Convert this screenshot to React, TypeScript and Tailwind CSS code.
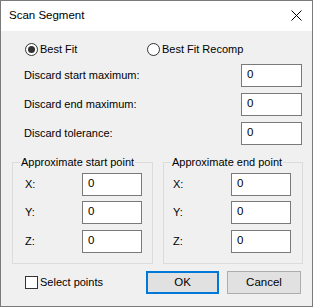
import React from 'react'

const font = { fontFamily: '"Liberation Sans", Arial, sans-serif' }

function TextBox({ value, className = '' }: { value: string; className?: string }) {
  return (
    <div
      className={`h-[23px] border border-[#7a7a7a] bg-white pl-[5px] text-[11.5px] leading-[19px] text-black ${className}`}
    >
      {value}
    </div>
  )
}

function Radio({ checked, label }: { checked?: boolean; label: string }) {
  return (
    <div className="flex items-center">
      <span className="flex h-[13px] w-[13px] items-center justify-center rounded-full border border-[#333] bg-white">
        {checked && <span className="h-[7px] w-[7px] rounded-full bg-[#333]" />}
      </span>
      <span className="ml-[2px] text-[11px] leading-[14px]">{label}</span>
    </div>
  )
}

function DiscardRow({ label }: { label: string }) {
  return (
    <div className="flex h-[23px] items-center justify-between pl-[23px] pr-[10px]">
      <span className="text-[11px]">{label}</span>
      <TextBox value="0" className="w-[61px]" />
    </div>
  )
}

function PointGroup({ title, labelPad, inputLeft }: { title: string; labelPad: string; inputLeft: string }) {
  const rows = ['X:', 'Y:', 'Z:']
  return (
    <div className="relative h-[102px] border border-[#dcdcdc]">
      <span className="absolute -top-[9px] left-[7px] whitespace-nowrap bg-[#f0f0f0] px-[1px] text-[11px] leading-[16px]">
        {title}
      </span>
      <div className={`flex flex-col pt-[10px] ${labelPad}`}>
        {rows.map((r, i) => (
          <div key={r} className={`flex h-[23px] items-center ${i === 1 ? 'mt-[5px]' : i === 2 ? 'mt-[6px]' : ''}`}>
            <span className={`text-[11px] ${inputLeft}`}>{r}</span>
            <TextBox value="0" className="w-[60px]" />
          </div>
        ))}
      </div>
    </div>
  )
}

export default function App() {
  return (
    <div style={font} className="h-[307px] w-[313px] border border-[#7a7a7a] bg-[#f0f0f0] text-black">
      {/* title bar */}
      <div className="flex h-[30px] items-center justify-between bg-white pl-[8px] pr-[10px]">
        <span className="text-[11.5px]">Scan Segment</span>
        <svg width="11" height="11" viewBox="0 0 11 11" className="mb-[1px]">
          <path d="M0.5 0.5 L10.5 10.5 M10.5 0.5 L0.5 10.5" stroke="#000" strokeWidth="1" />
        </svg>
      </div>

      {/* radios */}
      <div className="mt-[11px] flex h-[14px] items-center pl-[24px]">
        <div className="w-[122px]">
          <Radio checked label="Best Fit" />
        </div>
        <Radio label="Best Fit Recomp" />
      </div>

      <div className="mt-[8px] flex flex-col gap-[6px]">
        <DiscardRow label="Discard start maximum:" />
        <DiscardRow label="Discard end maximum:" />
        <DiscardRow label="Discard tolerance:" />
      </div>

      <div className="mt-[17px] grid grid-cols-[141px_140px] gap-[10px] pl-[11px]">
        <PointGroup title="Approximate start point" labelPad="pl-[12px]" inputLeft="w-[57px]" />
        <PointGroup title="Approximate end point" labelPad="pl-[9px]" inputLeft="w-[58px]" />
      </div>

      {/* footer */}
      <div className="mt-[7px] flex h-[23px] items-center pl-[24px]">
        <div className="flex w-[121px] items-center">
          <span className="h-[13px] w-[13px] border border-[#333] bg-white" />
          <span className="ml-[2px] text-[11px]">Select points</span>
        </div>
        <button className="h-[23px] w-[73px] border-2 border-[#0078d7] bg-[#e1e1e1] text-[11.5px]">OK</button>
        <button className="ml-[8px] h-[23px] w-[74px] border border-[#adadad] bg-[#e1e1e1] text-[11.5px]">
          Cancel
        </button>
      </div>
    </div>
  )
}
